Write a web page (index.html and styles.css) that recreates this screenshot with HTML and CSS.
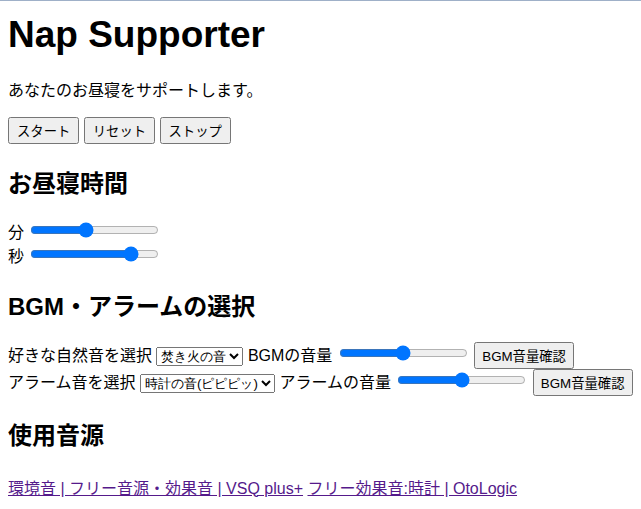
FILE: index.html
```html
<!DOCTYPE html>
<html lang="ja">
<head>
<meta charset="utf-8">
<title>Nap Supporter</title>
<link rel="stylesheet" href="styles.css">
</head>
<body>
<h1 class="title">Nap Supporter</h1>
<p class="lead">あなたのお昼寝をサポートします。</p>
<div class="controls">
<button class="btn">スタート</button>
<button class="btn">リセット</button>
<button class="btn">ストップ</button>
</div>
<h2 class="heading">お昼寝時間</h2>
<div class="time">
分 <input class="slider" type="range" min="0" max="60" value="25"><br>
秒 <input class="slider" type="range" min="0" max="60" value="49">
</div>
<h2 class="heading">BGM・アラームの選択</h2>
<div class="sound">
好きな自然音を選択 <select class="picker"><option>焚き火の音</option></select> BGMの音量 <input class="slider" type="range" min="0" max="100" value="50"> <button class="btn">BGM音量確認</button><br>
アラーム音を選択 <select class="picker"><option>時計の音(ピピピッ)</option></select> アラームの音量 <input class="slider" type="range" min="0" max="100" value="50"> <button class="btn">BGM音量確認</button>
</div>
<h2 class="heading">使用音源</h2>
<p class="sources"><a href="#a">環境音 | フリー音源・効果音 | VSQ plus+</a> <a href="#b">フリー効果音:時計 | OtoLogic</a></p>
</body>
</html>
```
FILE: styles.css
```css
html {
  border-top: 1px solid #9fb0c8;
}
body {
  margin: 13px 8px 8px;
  font-family: "Liberation Sans", "Noto Sans CJK JP", sans-serif;
  color: #000;
}
.title {
  font-size: 37px;
  margin: 0 0 21px;
}
.btn {
  font-family: "Liberation Sans", "Noto Sans CJK JP", sans-serif;
  font-size: 13.33px;
  padding: 2px 6px;
}
.controls .btn {
  padding: 2px 7px;
}
.sources {
  margin-top: 24px;
}
.sources a {
  color: #551a8b;
}
```
